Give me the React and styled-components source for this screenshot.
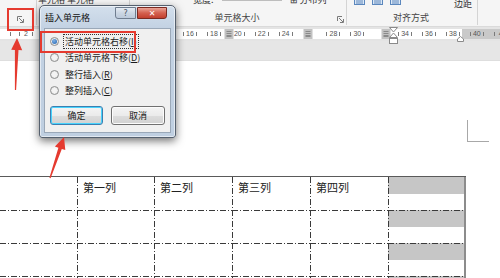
import React from "react";
import styled, { createGlobalStyle } from "styled-components";

const FONT = `"Noto Sans CJK SC", "Noto Sans", sans-serif`;
const RED = "#e53a2f";

const GlobalStyle = createGlobalStyle`
  html, body { margin: 0; padding: 0; background: #ffffff; }
  body { font-family: ${FONT}; }
  * { box-sizing: border-box; }
`;

const Screen = styled.div`
  position: relative;
  width: 500px;
  height: 278px;
  overflow: hidden;
  display: flex;
  flex-direction: column;
  background: #ffffff;
`;

/* ---------- ribbon ---------- */

const Ribbon = styled.div`
  height: 27px;
  flex: none;
  display: flex;
  background: #f5f5f5;
  border-bottom: 1px solid #dadada;
  overflow: hidden;
`;

const Group = styled.div`
  width: ${(p) => p.$w}px;
  flex: none;
  height: 25px;
  display: grid;
  grid-template-rows: 9px 1fr;
  border-right: 1px solid ${(p) => (p.$last ? "transparent" : "#d4d4d4")};
  padding-right: ${(p) => p.$pad ?? 2}px;
`;

const TopRow = styled.div`
  display: flex;
  align-items: flex-start;
  gap: ${(p) => p.$gap ?? 6}px;
  margin-top: ${(p) => p.$lift ?? -5}px;
  padding-left: ${(p) => p.$indent ?? 3}px;
  font-size: 9px;
  line-height: 10px;
  color: #333;
  white-space: nowrap;
`;

const LabelRow = styled.div`
  display: grid;
  grid-template-columns: 1fr auto 1fr;
  align-items: center;
  font-size: 9px;
  line-height: 10px;
  color: #444;
`;

const GroupLabel = styled.span`
  grid-column: 2;
  padding-top: 1px;
`;

const Launcher = styled.svg`
  grid-column: 3;
  justify-self: end;
  align-self: end;
  margin-bottom: 2px;
  width: 7px;
  height: 7px;
`;

const DropBox = styled.span`
  display: inline-block;
  width: 60px;
  height: 8px;
  margin-top: -2px;
  border: 1px solid #bdbdbd;
  background: #fff;
  font-size: 7px;
  line-height: 6px;
  text-align: right;
  padding-right: 2px;
  color: #555;
`;

const AlignIcon = styled.svg`
  width: 11px;
  height: 9px;
  margin-top: -3px;
`;

/* ---------- ruler ---------- */

const RulerBar = styled.div`
  height: 14px;
  flex: none;
  background: #e4e4e4;
  padding-top: 2px;
`;

const RulerTrack = styled.div`
  position: relative;
  height: 10px;
  background: linear-gradient(to right, #ffffff 0 462px, #c9c9c9 462px);
`;

const RulerNum = styled.span`
  position: absolute;
  top: 0;
  font-family: "Liberation Sans", sans-serif;
  font-size: 7px;
  line-height: 10px;
  color: #555;
  transform: translateX(-50%);
`;

const Tick = styled.span`
  position: absolute;
  top: 3px;
  width: 1px;
  height: 4px;
  background: #7a7a7a;
`;

const ColMarker = styled.span`
  position: absolute;
  top: 0;
  width: 9px;
  height: 10px;
  transform: translateX(-50%);
  background: #c2c2c2;
  &::after {
    content: "";
    position: absolute;
    left: 2px;
    top: 2px;
    width: 5px;
    height: 6px;
    background:
      linear-gradient(#8a8a8a, #8a8a8a) 0 0 / 100% 1px no-repeat,
      linear-gradient(#8a8a8a, #8a8a8a) 0 2px / 100% 1px no-repeat,
      linear-gradient(#8a8a8a, #8a8a8a) 0 4px / 100% 1px no-repeat,
      linear-gradient(#8a8a8a, #8a8a8a) 0 100% / 100% 1px no-repeat;
  }
`;

const IndentMark = styled.svg`
  position: absolute;
  top: -2px;
  left: 389px;
  width: 9px;
  height: 18px;
`;

const RightIndent = styled.svg`
  position: absolute;
  top: 7px;
  left: 457px;
  width: 7px;
  height: 6px;
`;

const Band = styled.div`
  height: 20px;
  flex: none;
  background: #e6e6e6;
  border-bottom: 1px solid #dedede;
`;

/* ---------- document ---------- */

const Doc = styled.div`
  flex: 1;
  display: flex;
  flex-direction: column;
  background: #ffffff;
`;

const CornerMark = styled.div`
  margin: 59px 0 0 467px;
  width: 22px;
  height: 22px;
  border-left: 1px solid #a8a8a8;
  border-bottom: 1px solid #a8a8a8;
`;

const dashH = "repeating-linear-gradient(to right, #3a3a3a 0 6px, transparent 6px 8px, #3a3a3a 8px 9px, transparent 9px 11px)";
const dashV = "repeating-linear-gradient(to bottom, #3a3a3a 0 6px, transparent 6px 8px, #3a3a3a 8px 9px, transparent 9px 11px)";

const Table = styled.div`
  margin-top: 34px;
  width: 466px;
  display: grid;
  grid-template-columns: 77px 77px 78px 78px 78px 78px;
  grid-auto-rows: 33px;
  border-top: 1px solid #5a5a5a;
`;

const Cell = styled.div`
  padding: 2px 0 0 6px;
  font-size: 11px;
  line-height: 16px;
  color: #222;
  background:
    ${(p) => (p.$head ? "none" : `${dashH} 0 0 / 100% 1px no-repeat`)},
    ${(p) => (p.$first ? "none" : `${dashV} 0 0 / 1px 100% no-repeat`)},
    ${(p) => (p.$shade ? "linear-gradient(#c6c6c6, #c6c6c6) 0 0 / 100% 17px no-repeat" : "none")};
  border-right: ${(p) => (p.$shade ? "2px solid #8c8c8c" : "none")};
`;

/* ---------- dialog ---------- */

const Dialog = styled.div`
  position: absolute;
  left: 39px;
  top: 5px;
  width: 137px;
  height: 133px;
  display: flex;
  flex-direction: column;
  padding: 0 4px 4px;
  border: 1px solid #55606e;
  border-radius: 5px 5px 3px 3px;
  background: linear-gradient(#d3dfec, #c3d2e3 22px, #bfcfe1);
  box-shadow: 0 3px 9px rgba(0, 0, 0, 0.55), inset 0 0 0 1px rgba(255, 255, 255, 0.55);
`;

const TitleBar = styled.div`
  height: 22px;
  flex: none;
  display: flex;
  align-items: flex-start;
  padding-left: 1px;
`;

const Title = styled.span`
  margin-top: 7px;
  font-size: 9px;
  line-height: 10px;
  color: #111;
  flex: 1;
`;

const CapButton = styled.span`
  margin-top: 1px;
  height: 12px;
  width: ${(p) => p.$w}px;
  display: flex;
  align-items: center;
  justify-content: center;
  font-family: "DejaVu Sans", sans-serif;
  font-size: 8px;
  font-weight: ${(p) => (p.$close ? 700 : 400)};
  color: ${(p) => (p.$close ? "#ffffff" : "#4a5563")};
  border: 1px solid ${(p) => (p.$close ? "#7b2a22" : "#6f7d8f")};
  border-radius: ${(p) => (p.$close ? "0 0 3px 0" : "0 0 0 3px")};
  background: ${(p) =>
    p.$close
      ? "linear-gradient(#e9a396, #d4604f 50%, #c2402f)"
      : "linear-gradient(#e4ebf3, #cbd6e3 50%, #bccadb)"};
  margin-right: ${(p) => (p.$close ? 4 : 1)}px;
`;

const Client = styled.div`
  flex: 1;
  background: #f0f0f0;
  border: 1px solid #9aa8b8;
  padding: 4px 5px 0 5px;
  display: flex;
  flex-direction: column;
`;

const Option = styled.div`
  height: 16.5px;
  display: flex;
  align-items: center;
  gap: 4px;
  font-size: 9px;
  line-height: 11px;
  color: #1a1a1a;
`;

const Radio = styled.span`
  width: 9px;
  height: 9px;
  flex: none;
  border-radius: 50%;
  border: 1px solid #8e8f8f;
  background: radial-gradient(circle, #f4f4f4 0 40%, #d9d9d9 100%);
  display: flex;
  align-items: center;
  justify-content: center;
  &::after {
    content: "";
    width: 5px;
    height: 5px;
    border-radius: 50%;
    background: ${(p) => (p.$on ? "radial-gradient(circle at 40% 35%, #7fb2e6, #1d5fae)" : "transparent")};
  }
`;

const OptText = styled.span`
  padding: 1px 1px;
  border: 1px dotted ${(p) => (p.$focus ? "#333" : "transparent")};
  & u { text-decoration: underline; }
`;

const ButtonRow = styled.div`
  display: flex;
  gap: 8px;
  margin-top: 7px;
`;

const DlgButton = styled.span`
  width: ${(p) => p.$w}px;
  height: 19px;
  display: flex;
  align-items: center;
  justify-content: center;
  font-size: 9px;
  color: #1a1a1a;
  border-radius: 3px;
  border: 1px solid ${(p) => (p.$primary ? "#3c7fb1" : "#707070")};
  background: linear-gradient(#f4f4f4, #ebebeb 50%, #dddddd 51%, #d1d1d1);
  box-shadow: ${(p) => (p.$primary ? "inset 0 0 0 1px #48d3fd" : "inset 0 0 0 1px #fcfcfc")};
`;

/* ---------- callouts ---------- */

const Callout = styled.div`
  position: absolute;
  left: ${(p) => p.$x}px;
  top: ${(p) => p.$y}px;
  width: ${(p) => p.$w}px;
  height: ${(p) => p.$h}px;
  border: 2px solid ${RED};
  pointer-events: none;
`;

const Overlay = styled.svg`
  position: absolute;
  left: 0;
  top: 0;
  width: 500px;
  height: 278px;
  pointer-events: none;
`;

// tapered arrow from (x1,y1) to the tip (x2,y2)
const arrowPoints = (x1, y1, x2, y2, head = 12, half = 5.5) => {
  const dx = x2 - x1;
  const dy = y2 - y1;
  const len = Math.hypot(dx, dy);
  const ux = dx / len;
  const uy = dy / len;
  const nx = -uy;
  const ny = ux;
  const bx = x2 - ux * head;
  const by = y2 - uy * head;
  const p = (x, y) => `${x.toFixed(1)},${y.toFixed(1)}`;
  return [
    p(x1 + nx * 0.6, y1 + ny * 0.6),
    p(bx + nx * 1.8, by + ny * 1.8),
    p(bx + nx * half, by + ny * half),
    p(x2, y2),
    p(bx - nx * half, by - ny * half),
    p(bx - nx * 1.8, by - ny * 1.8),
    p(x1 - nx * 0.6, y1 - ny * 0.6),
  ].join(" ");
};

const LauncherIcon = () => (
  <Launcher viewBox="0 0 7 7">
    <path d="M0.5 5V0.5H5" fill="none" stroke="#7a7a7a" strokeWidth="1" />
    <path d="M2 2L6 6M6.5 3V6.5H3" fill="none" stroke="#7a7a7a" strokeWidth="1" />
  </Launcher>
);

const AlignGlyph = () => (
  <AlignIcon viewBox="0 0 11 9">
    <rect x="0.5" y="0.5" width="10" height="8" fill="#dbe8f6" stroke="#5b87bd" />
    <path d="M2 3H9M2 5H9M2 7H9" stroke="#3f6fae" strokeWidth="0.8" />
  </AlignIcon>
);

// ruler scale: one label every two character units
const rulerX = (n) => 190 + ((n - 16) / 2) * 23.9;
const markers = [77, 154, 229, 308, 386];
const numbers = [2, 16, 18, 20, 22, 24, 28, 30, 34, 36, 38, 40, 42];

const columns = ["", "第一列", "第二列", "第三列", "第四列", ""];
const rows = [true, false, false, false];

const options = [
  { text: "活动单元格右移", key: "I", on: true },
  { text: "活动单元格下移", key: "D" },
  { text: "整行插入", key: "R" },
  { text: "整列插入", key: "C" },
];

export default function App() {
  return (
    <>
      <GlobalStyle />
      <Screen>
        <Ribbon>
          <Group $w={37} $pad={12}>
            <TopRow />
            <LabelRow>
              <GroupLabel />
              <LauncherIcon />
            </LabelRow>
          </Group>
          <Group $w={93}>
            <TopRow $indent={1} $gap={4}>
              <span>单元格 单元格</span>
            </TopRow>
            <LabelRow />
          </Group>
          <Group $w={217}>
            <TopRow $indent={63} $gap={8}>
              <span>宽度:</span>
              <DropBox>▾</DropBox>
              <span>⊞ 分布列</span>
            </TopRow>
            <LabelRow>
              <GroupLabel>单元格大小</GroupLabel>
              <LauncherIcon />
            </LabelRow>
          </Group>
          <Group $w={131}>
            <TopRow $indent={7} $gap={7} $lift={-1}>
              <AlignGlyph />
              <AlignGlyph />
              <AlignGlyph />
              <span style={{ marginLeft: 46 }}>边距</span>
            </TopRow>
            <LabelRow>
              <GroupLabel>对齐方式</GroupLabel>
            </LabelRow>
          </Group>
          <Group $w={22} $last />
        </Ribbon>

        <RulerBar>
          <RulerTrack>
            <Tick style={{ left: 10 }} />
            {numbers.map((n) => {
              const x = n === 2 ? 26 : rulerX(n);
              return (
                <React.Fragment key={n}>
                  <Tick style={{ left: x - 7 }} />
                  <RulerNum style={{ left: x }}>{n === 42 ? "4" : n}</RulerNum>
                  <Tick style={{ left: x + 6 }} />
                </React.Fragment>
              );
            })}
            {markers.map((m) => (
              <ColMarker key={m} style={{ left: m }} />
            ))}
            <IndentMark viewBox="0 0 9 18">
              <path d="M0.5 0.5H8.5L4.5 5Z" fill="#fff" stroke="#8a8a8a" />
              <path d="M4.5 6L8.5 10.5H0.5Z" fill="#fff" stroke="#8a8a8a" />
              <rect x="0.5" y="11.5" width="8" height="5" fill="#fff" stroke="#8a8a8a" />
            </IndentMark>
            <RightIndent viewBox="0 0 7 6">
              <path d="M0.5 5.5V3L3.5 0.5L6.5 3V5.5Z" fill="#fff" stroke="#8a8a8a" />
            </RightIndent>
          </RulerTrack>
        </RulerBar>
        <Band />

        <Doc>
          <CornerMark />
          <Table>
            {rows.map((head, r) =>
              columns.map((label, c) => (
                <Cell
                  key={`${r}-${c}`}
                  $head={head}
                  $first={c === 0}
                  $shade={c === columns.length - 1}
                >
                  {head ? label : ""}
                </Cell>
              ))
            )}
          </Table>
        </Doc>

        <Dialog>
          <TitleBar>
            <Title>插入单元格</Title>
            <CapButton $w={21}>?</CapButton>
            <CapButton $w={30} $close>
              ✕
            </CapButton>
          </TitleBar>
          <Client>
            {options.map((o) => (
              <Option key={o.key}>
                <Radio $on={o.on} />
                <OptText $focus={o.on}>
                  {o.text}(<u>{o.key}</u>)
                </OptText>
              </Option>
            ))}
            <ButtonRow>
              <DlgButton $w={53} $primary>
                确定
              </DlgButton>
              <DlgButton $w={54}>取消</DlgButton>
            </ButtonRow>
          </Client>
        </Dialog>

        <Callout $x={7} $y={8} $w={27} $h={23} />
        <Callout $x={40} $y={31} $w={96} $h={22} />

        <Overlay viewBox="0 0 500 278">
          <polygon points={arrowPoints(15.5, 90, 17, 38)} fill={RED} />
          <polygon points={arrowPoints(50, 178, 64, 137)} fill={RED} />
        </Overlay>
      </Screen>
    </>
  );
}
